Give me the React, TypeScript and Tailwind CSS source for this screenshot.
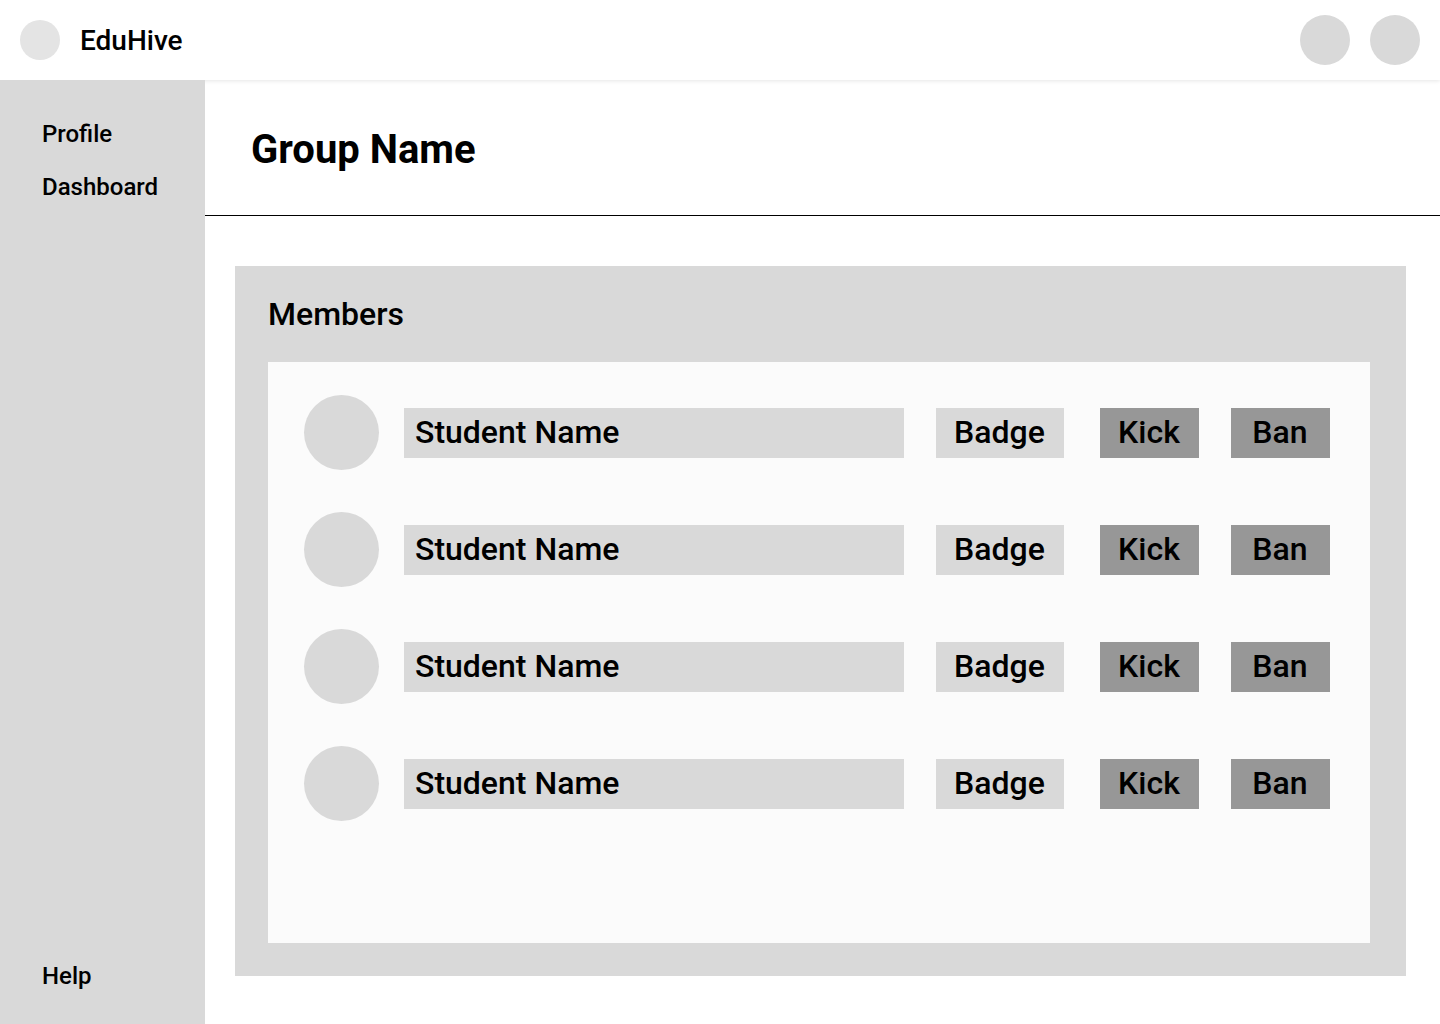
const members = [1, 2, 3, 4];

function MemberRow() {
  return (
    <li className="flex items-center">
      <span className="size-[75px] shrink-0 rounded-full bg-[#d9d9d9]" />
      <span className="ml-[25px] mr-8 flex h-[50px] min-w-0 flex-1 items-center bg-[#d9d9d9] px-[11px] pb-0.5">
        Student Name
      </span>
      <span className="mr-9 flex h-[50px] w-32 items-center justify-center bg-[#d9d9d9] pr-px pb-0.5">
        Badge
      </span>
      <button type="button" className="mr-8 h-[50px] w-[99px] bg-[#979797] pr-px pb-0.5">
        Kick
      </button>
      <button type="button" className="h-[50px] w-[99px] bg-[#979797] pr-px pb-0.5">
        Ban
      </button>
    </li>
  );
}

export default function App() {
  return (
    <div className="flex min-h-screen flex-col bg-white font-['Roboto',sans-serif] font-medium text-black">
      <header className="flex h-20 items-center bg-white px-5 shadow-[0_1px_4px_rgba(0,0,0,0.1)]">
        <span className="size-10 rounded-full bg-[#e4e4e4]" />
        <span className="ml-5 pt-0.5 text-[28px] leading-9">EduHive</span>
        <div className="ml-auto flex gap-5">
          <button type="button" aria-label="Notifications" className="size-[50px] rounded-full bg-[#d9d9d9]" />
          <button type="button" aria-label="Account" className="size-[50px] rounded-full bg-[#d9d9d9]" />
        </div>
      </header>
      <div className="flex flex-1">
        <nav className="flex w-[205px] shrink-0 flex-col bg-[#d9d9d9] px-[42px] pt-10 pb-[34px] text-2xl leading-7">
          <a href="#profile">Profile</a>
          <a href="#dashboard" className="mt-[25px]">Dashboard</a>
          <a href="#help" className="mt-auto">Help</a>
        </nav>
        <main className="flex min-w-0 flex-1 flex-col">
          <div className="flex h-[136px] items-center border-b border-black px-[46px] pt-1">
            <h1 className="text-[40px] leading-[48px] font-bold">Group Name</h1>
          </div>
          <section className="mt-[50px] mr-[34px] mb-12 ml-[30px] flex flex-1 flex-col bg-[#d9d9d9] pt-[29px] pr-9 pb-[33px] pl-[33px] text-[32px] leading-[38px]">
            <h2>Members</h2>
            <ul className="mt-[29px] flex flex-1 flex-col gap-[42px] bg-[#fbfbfb] pt-[33px] pr-10 pb-[33px] pl-9">
              {members.map((id) => (
                <MemberRow key={id} />
              ))}
            </ul>
          </section>
        </main>
      </div>
    </div>
  );
}
